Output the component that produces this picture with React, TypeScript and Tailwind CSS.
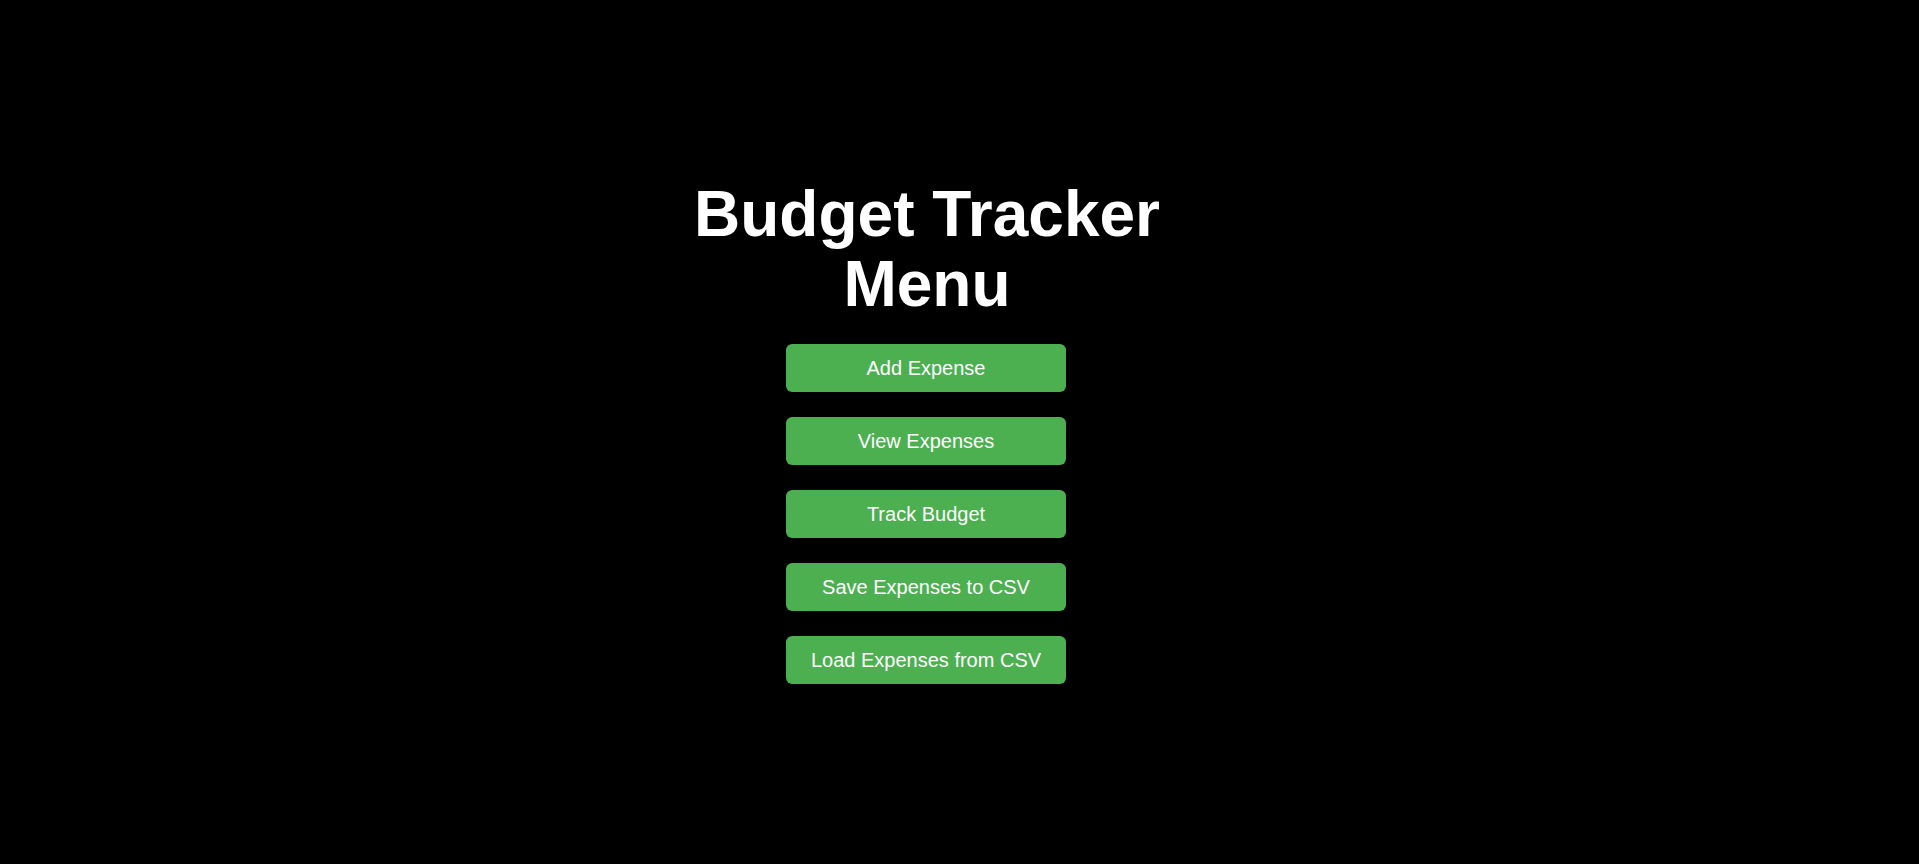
const actions: string[] = [
  'Add Expense',
  'View Expenses',
  'Track Budget',
  'Save Expenses to CSV',
  'Load Expenses from CSV',
];

export default function App() {
  return (
    <main className="flex h-screen w-full justify-center bg-black pt-[179px] pr-[67px] font-['Liberation_Sans',Arial,sans-serif] text-white">
      <div className="flex w-[500px] flex-col items-center">
        <h1 className="pl-0.5 text-center text-[64px] leading-[70px] font-bold">Budget Tracker Menu</h1>
        <nav className="mt-[25px] flex w-[280px] flex-col gap-[25px]">
          {actions.map((label) => (
            <button
              key={label}
              type="button"
              className="h-12 w-full rounded-[6.25px] bg-[#4caf50] text-center text-xl leading-6 whitespace-nowrap text-white"
            >
              {label}
            </button>
          ))}
        </nav>
      </div>
    </main>
  );
}
